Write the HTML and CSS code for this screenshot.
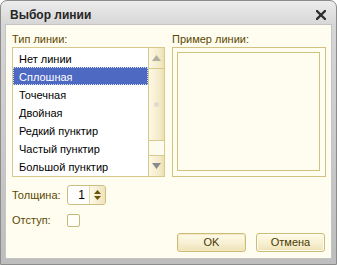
FILE: index.html
```html
<!DOCTYPE html>
<html>
<head>
<meta charset="utf-8">
<link rel="stylesheet" href="styles.css">
</head>
<body>
<div class="window">
  <div class="titlebar">
    <span class="title">Выбор линии</span>
    <svg class="close" width="10" height="10" viewBox="0 0 10 10"><path d="M1 1 L9 9 M9 1 L1 9" stroke="#2e2e2e" stroke-width="2.3" stroke-linecap="square" fill="none"/></svg>
  </div>
  <div class="content">
    <div class="columns">
      <div class="col">
        <div class="label">Тип линии:</div>
        <div class="listbox">
          <ul class="items">
            <li>Нет линии</li>
            <li class="sel">Сплошная</li>
            <li>Точечная</li>
            <li>Двойная</li>
            <li>Редкий пунктир</li>
            <li>Частый пунктир</li>
            <li>Большой пунктир</li>
          </ul>
          <div class="scrollbar">
            <div class="sb-btn sb-up"><svg width="9" height="6" viewBox="0 0 9 6"><path d="M4.5 0 L9 6 L0 6 Z" fill="#b4b0a0"/></svg></div>
            <div class="sb-thumb"><span class="grip"></span></div>
            <div class="sb-track"></div>
            <div class="sb-btn sb-down"><svg width="9" height="6" viewBox="0 0 9 6"><path d="M0 0 L9 0 L4.5 6 Z" fill="#8a8a8a"/></svg></div>
          </div>
        </div>
      </div>
      <div class="col">
        <div class="label">Пример линии:</div>
        <div class="sample"><div class="sample-inner"></div></div>
      </div>
    </div>
    <div class="field-row row-thick">
      <span class="label field-label">Толщина:</span>
      <div class="spin">
        <span class="spin-value">1</span>
        <span class="spin-btn">
          <svg width="7" height="4" viewBox="0 0 7 4"><path d="M3.5 0 L7 4 L0 4 Z" fill="#6a5208"/></svg>
          <svg width="7" height="4" viewBox="0 0 7 4"><path d="M0 0 L7 0 L3.5 4 Z" fill="#6a5208"/></svg>
        </span>
      </div>
    </div>
    <div class="field-row row-indent">
      <span class="label field-label">Отступ:</span>
      <span class="checkbox"></span>
    </div>
    <div class="buttons">
      <button class="btn btn-default">OK</button>
      <button class="btn">Отмена</button>
    </div>
  </div>
</div>
</body>
</html>
```

FILE: styles.css
```css
html, body {
  margin: 0;
  padding: 0;
  background: #ffffff;
  width: 337px;
  height: 265px;
  overflow: hidden;
}

.window {
  width: 337px;
  height: 265px;
  box-sizing: border-box;
  border: 1px solid #8c8c8c;
  border-radius: 7px 7px 0 0;
  background: linear-gradient(#ececec, #d6d6d6 24px, #c8c8c8 60%, #bdbdbd);
  padding: 0 5px 6px 5px;
  display: flex;
  flex-direction: column;
  font-family: "Liberation Sans", Arial, sans-serif;
  font-size: 11px;
}

.titlebar {
  height: 24px;
  box-sizing: border-box;
  padding: 4px 5px 0 4px;
  display: flex;
  align-items: center;
  justify-content: space-between;
}

.title {
  font-weight: bold;
  font-size: 12px;
  color: #262626;
  line-height: 14px;
}

.close {
  display: block;
}

.content {
  flex: 1;
  background: #fffdf0;
  padding: 7px 5px 6px 6px;
  display: flex;
  flex-direction: column;
  box-shadow: 0 0 0 1px #c4c4c4;
}

.columns {
  display: grid;
  grid-template-columns: 153px 154px;
  column-gap: 7px;
}

.col {
  display: flex;
  flex-direction: column;
}

.label {
  color: #5c4800;
  line-height: 15px;
  height: 15px;
}

.listbox {
  height: 130px;
  box-sizing: border-box;
  border: 1px solid #d6c98c;
  background: #ffffff;
  display: flex;
  overflow: hidden;
}

.items {
  list-style: none;
  margin: 0;
  padding: 1px 0 0 0;
  flex: 1;
  overflow: hidden;
}

.items li {
  height: 18px;
  line-height: 16px;
  padding-top: 2px;
  padding-left: 6px;
  color: #000000;
  white-space: nowrap;
  box-sizing: border-box;
}

.items li.sel {
  background: #4e69c2;
  color: #ffffff;
  border: 1px dotted #d8dcf0;
  line-height: 14px;
  padding-top: 2px;
  padding-left: 5px;
}

.scrollbar {
  width: 15px;
  border-left: 1px solid #d6c98c;
  display: flex;
  flex-direction: column;
}

.sb-btn, .sb-thumb {
  background: linear-gradient(to right, #fcf8e6, #f3ebc8 70%, #ece0b0);
  display: flex;
  align-items: center;
  justify-content: center;
}

.sb-up {
  height: 20px;
  border-bottom: 1px solid #d6c98c;
}

.sb-thumb {
  height: 71px;
  border-bottom: 1px solid #d6c98c;
}

.grip {
  width: 5px;
  height: 5px;
  border-radius: 50%;
  background: #e0dccc;
}

.sb-track {
  height: 14px;
  background: #fdfaee;
}

.sb-down {
  height: 20px;
  border-top: 1px solid #d6c98c;
}

.sample {
  height: 130px;
  box-sizing: border-box;
  border: 1px solid #d2c282;
  padding: 4px 5px 5px 4px;
}

.sample-inner {
  height: 100%;
  box-sizing: border-box;
  border: 1px solid #d2c282;
}

.field-row {
  display: flex;
  align-items: center;
}

.row-thick {
  margin-top: 8px;
}

.row-indent {
  margin-top: 8px;
}

.field-label {
  width: 55px;
}

.spin {
  width: 39px;
  height: 20px;
  box-sizing: border-box;
  border: 1px solid #cdbd7e;
  border-radius: 3px;
  display: flex;
  background: #ffffff;
  overflow: hidden;
}

.spin-value {
  flex: 1;
  text-align: right;
  padding-right: 4px;
  line-height: 18px;
  font-size: 12px;
  color: #000;
}

.spin-btn {
  width: 15px;
  border-left: 1px solid #e4d9a8;
  background: linear-gradient(to right, #fdf9e8, #efe4bc);
  display: flex;
  flex-direction: column;
  align-items: center;
  justify-content: center;
  gap: 2px;
}

.spin-btn svg {
  display: block;
}

.checkbox {
  width: 13px;
  height: 13px;
  box-sizing: border-box;
  border: 1px solid #c8b87a;
  border-radius: 2px;
  background: #fffef8;
}

.buttons {
  margin-top: auto;
  display: flex;
  justify-content: flex-end;
  gap: 10px;
  padding-right: 1px;
}

.btn {
  width: 69px;
  height: 19px;
  box-sizing: border-box;
  border: 1px solid #cdbc78;
  border-radius: 3px;
  background: linear-gradient(#fffbea, #f6eecf 60%, #ede1b6);
  box-shadow: inset 0 0 0 1px #fffdf2;
  font-family: "Liberation Sans", Arial, sans-serif;
  font-size: 11px;
  color: #4a3a00;
  padding: 0;
  line-height: 17px;
}

.btn-default {
  box-shadow: inset 0 0 0 1px #f4e9c0;
}
```
